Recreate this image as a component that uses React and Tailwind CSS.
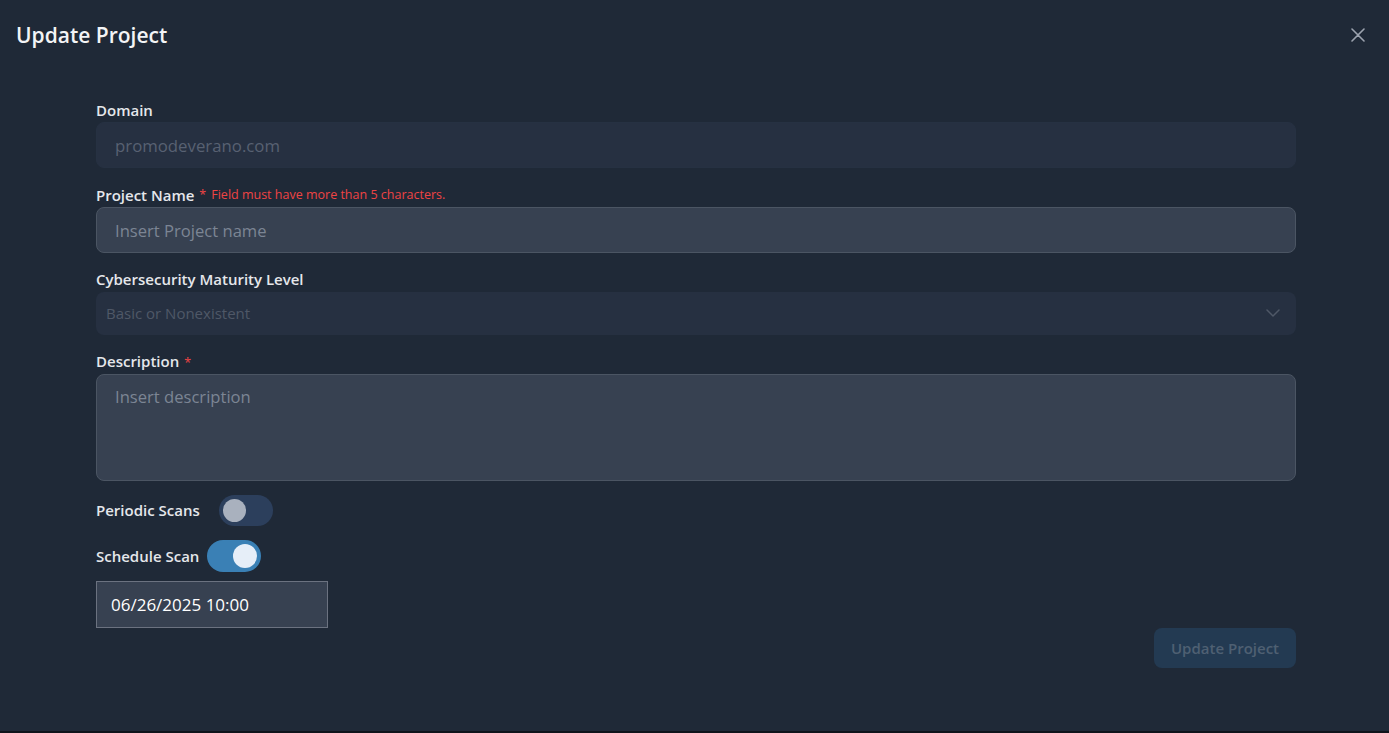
import { useState } from "react";

function Toggle({ checked, onChange }) {
  return (
    <button
      type="button"
      onClick={() => onChange(!checked)}
      className={
        checked
          ? "relative h-[32px] w-[54px] rounded-full bg-[#3a80b5]"
          : "relative h-[31px] w-[54px] rounded-full bg-[#2c3f5c]"
      }
    >
      <span
        className={
          checked
            ? "absolute right-[4px] top-[4px] h-[24px] w-[24px] rounded-full bg-[#e6eef8]"
            : "absolute left-[4px] top-[4px] h-[23px] w-[23px] rounded-full bg-[#a9b1be]"
        }
      />
    </button>
  );
}

export default function App() {
  const [periodic, setPeriodic] = useState(false);
  const [schedule, setSchedule] = useState(true);

  return (
    <div
      className="flex h-[733px] w-full flex-col bg-[#1f2937]"
      style={{ fontFamily: '"Open Sans", "Noto Sans", sans-serif' }}
    >
      <div className="flex-1">
        {/* header */}
        <div className="flex items-center justify-between px-4 pt-[20px]">
          <h3 className="text-[21px] font-semibold leading-[30px] text-[#f3f4f6]">Update Project</h3>
          <button type="button" className="mr-[8px] text-[#9ca3af]">
            <svg className="h-[14px] w-[14px]" viewBox="0 0 14 14" fill="none">
              <path
                d="m1 1 6 6m0 0 6 6M7 7l6-6M7 7l-6 6"
                stroke="currentColor"
                strokeLinecap="round"
                strokeWidth="1.6"
              />
            </svg>
          </button>
        </div>

        {/* body */}
        <form className="ml-[96px] mt-[50px] flex w-[1200px] flex-col">
          <label className="h-5 text-[15px] font-semibold leading-5 text-[#e5e7eb]">Domain</label>
          <input
            disabled
            value="promodeverano.com"
            readOnly
            className="mt-[2px] h-[46px] w-full rounded-lg border border-[#263142] bg-[#263041] px-[18px] text-[16.8px] text-[#586172]"
          />

          <div className="mt-[17px] flex h-5 items-baseline gap-[5px] leading-5">
            <label className="text-[15px] font-semibold leading-5 text-[#e5e7eb]">Project Name</label>
            <span className="-translate-y-[2px] text-[12.5px] leading-5 text-[#ef4444]">*</span>
            <span className="-translate-y-[2px] text-[12.5px] leading-5 text-[#ef4444]">
              Field must have more than 5 characters.
            </span>
          </div>
          <input
            placeholder="Insert Project name"
            className="mt-[2px] h-[46px] w-full rounded-lg border border-[#4b5563] bg-[#374151] px-[18px] text-[16.6px] text-white outline-none placeholder:text-[#7c8594]"
          />

          <label className="mt-[16px] h-5 text-[15px] font-semibold leading-5 text-[#e5e7eb]">
            Cybersecurity Maturity Level
          </label>
          <div className="relative mt-[3px] flex h-[43px] w-full items-center rounded-lg bg-[#263041] px-[10px]">
            <span className="text-[15px] text-[#4f5867]">Basic or Nonexistent</span>
            <svg
              className="absolute right-[16px] top-[15px] h-[12px] w-[14px] text-[#4f5867]"
              viewBox="0 0 14 12"
              fill="none"
            >
              <path d="M1 3l6 6 6-6" stroke="currentColor" strokeWidth="1.5" strokeLinecap="round" strokeLinejoin="round" />
            </svg>
          </div>

          <div className="mt-[16px] flex h-5 items-baseline gap-[5px] leading-5">
            <label className="text-[15px] font-semibold leading-5 text-[#e5e7eb]">Description</label>
            <span className="text-[12.5px] leading-5 text-[#ef4444]">*</span>
          </div>
          <textarea
            placeholder="Insert description"
            className="mt-[3px] h-[107px] w-full resize-none rounded-lg border border-[#4b5563] bg-[#374151] px-[18px] py-[10px] text-[16.6px] text-white outline-none placeholder:text-[#7c8594]"
          />

          <div className="mt-[14px] flex items-center gap-[19px]">
            <span className="text-[15px] font-semibold text-[#e5e7eb]">Periodic Scans</span>
            <Toggle checked={periodic} onChange={setPeriodic} />
          </div>

          <div className="mt-[14px] flex items-center gap-[8px]">
            <span className="text-[15px] font-semibold text-[#e5e7eb]">Schedule Scan</span>
            <Toggle checked={schedule} onChange={setSchedule} />
          </div>

          <input
            value="06/26/2025 10:00"
            readOnly
            className="mt-[9px] h-[47px] w-[232px] border border-[#6b7280] bg-[#374151] px-[14px] text-[17px] text-white outline-none"
          />

          <div className="flex justify-end">
            <button
              type="button"
              disabled
              className="h-[40px] w-[142px] rounded-lg bg-[#233a52] text-[15px] font-semibold text-[#4f6072]"
            >
              Update Project
            </button>
          </div>
        </form>
      </div>
      <div className="h-[2px] w-full bg-[#0f141b]" />
    </div>
  );
}
